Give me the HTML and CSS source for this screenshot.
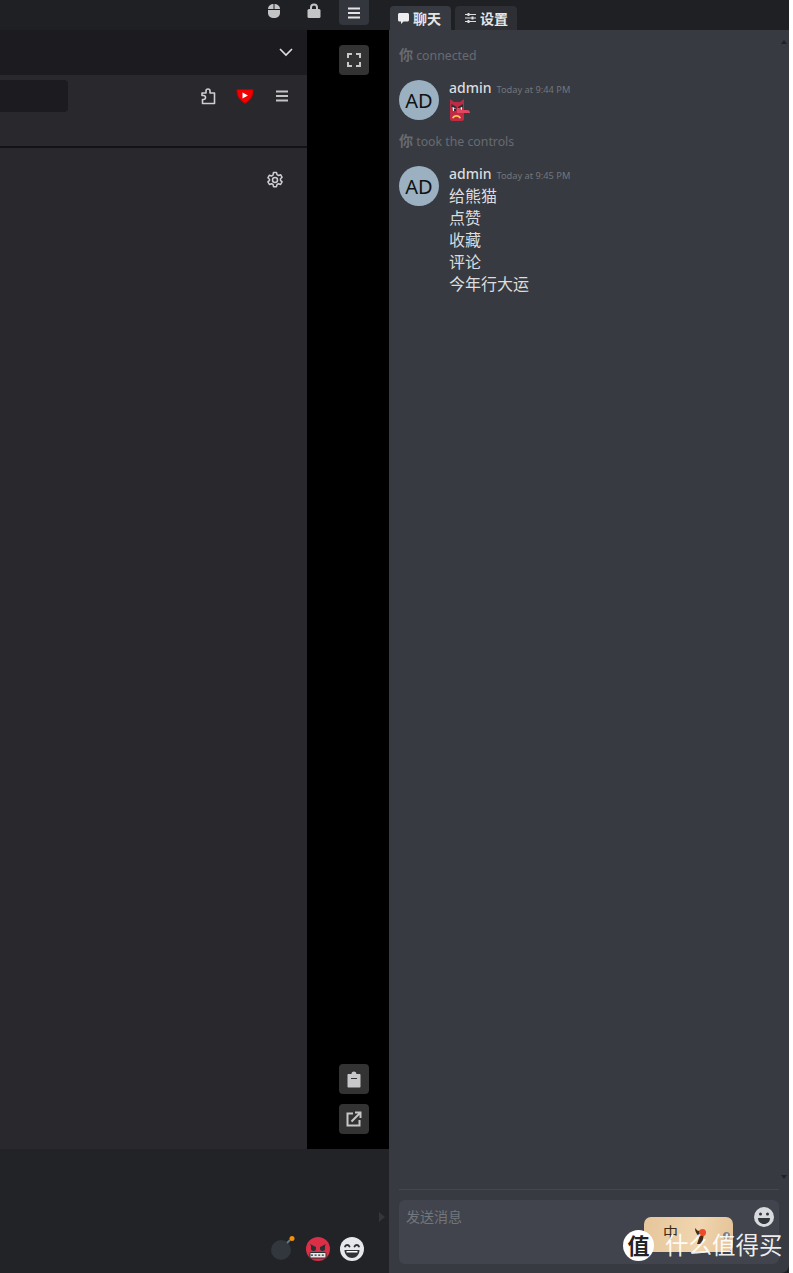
FILE: index.html
```html
<!DOCTYPE html>
<html lang="en">
<head>
    <meta charset="UTF-8">
    <meta name="viewport" content="width=device-width, initial-scale=1.0">
    <title>Remote Session</title>
    <link rel="stylesheet" href="styles.css">
</head>
<body>
    <div class="app">
        <div class="remote">
            <div class="topbar">
                <span class="top-icon">
                    <svg width="12" height="14" viewBox="0 0 12 14"><path fill="#c4c4c6" d="M6 0C2.500 0 0 2 0 5v4c0 3 2.500 5 6 5s6-2 6-5V5c0-3-2.500-5-6-5z"/><path stroke="#1f2024" stroke-width="1" d="M6 0v5.500M0 5.500h12"/></svg>
                </span>
                <span class="top-icon">
                    <svg width="14" height="15" viewBox="0 0 14 15"><path fill="none" stroke="#c4c4c6" stroke-width="2" d="M4 6V4.500a3 3 0 0 1 6 0V6"/><rect x="0.500" y="6" width="13" height="9" rx="1.500" fill="#c4c4c6"/></svg>
                </span>
                <span class="tool-btn tool-btn-top">
                    <svg width="14" height="12" viewBox="0 0 14 12"><path stroke="#e4e4e6" stroke-width="2" d="M1 1.500h12M1 6h12M1 10.500h12"/></svg>
                </span>
            </div>
            <div class="stage">
                <div class="browser">
                    <div class="tabstrip">
                        <svg width="14" height="9" viewBox="0 0 14 9"><path fill="none" stroke="#e0e0e2" stroke-width="1.600" d="M1 1l6 6 6-6"/></svg>
                    </div>
                    <div class="toolbar">
                        <div class="urlbar"></div>
                        <div class="toolbar-icons">
                            <svg class="puzzle" width="16" height="17" viewBox="0 0 16 17"><path fill="none" stroke="#cfcfd2" stroke-width="1.600" stroke-linejoin="round" d="M6 5V3a2 2 0 0 1 4 0v2h4.500v10.500H2.500v-4h1a2 2 0 0 0 0-4h-1.500V5z"/></svg>
                            <svg width="20" height="20" viewBox="0 0 20 20"><path fill="#f00000" stroke="#b50000" stroke-width="1" d="M2 3.500h16c.5 5.500-1.500 10-8 14-6.500-4-8.500-8.500-8-14z"/><path fill="#fff" d="M7.500 6.500l5.500 3-5.500 3z"/></svg>
                            <svg width="14" height="12" viewBox="0 0 14 12"><path stroke="#c4c4c6" stroke-width="2" d="M1 1.500h12M1 6h12M1 10.500h12"/></svg>
                        </div>
                    </div>
                    <div class="page">
                        <svg width="18" height="18" viewBox="0 0 18 18"><path fill="none" stroke="#cfcfd2" stroke-width="1.500" stroke-linejoin="round" d="M7.500 1.500h3l.5 2.200 1.500.8 2.100-.8 1.500 2.600-1.600 1.500v1.600l1.600 1.500-1.500 2.600-2.100-.8-1.500.8-.5 2.200h-3L7 13.500l-1.500-.8-2.100.8-1.500-2.600 1.600-1.500V8.300L1.900 6.800l1.500-2.600 2.100.8L7 4.200z"/><circle cx="9" cy="9" r="2.500" fill="none" stroke="#cfcfd2" stroke-width="1.500"/></svg>
                    </div>
                </div>
                <div class="side-tools">
                    <span class="tool-btn">
                        <svg width="14" height="14" viewBox="0 0 14 14"><path fill="none" stroke="#c8c8ca" stroke-width="2" d="M1 5V1h4M9 1h4v4M13 9v4H9M5 13H1V9"/></svg>
                    </span>
                    <div class="side-tools-bottom">
                        <span class="tool-btn">
                            <svg width="14" height="17" viewBox="0 0 14 17"><path fill="#c8c8ca" d="M1.500 3H4.500a2.500 2.500 0 0 1 5 0h3c.6 0 1 .4 1 1v11.500c0 .6-.4 1-1 1h-11c-.6 0-1-.4-1-1V4c0-.6.4-1 1-1z"/><path stroke="#333" stroke-width="1" d="M4 7.500h6"/></svg>
                        </span>
                        <span class="tool-btn">
                            <svg width="16" height="16" viewBox="0 0 16 16"><path fill="none" stroke="#c8c8ca" stroke-width="2" d="M7 2.500H1.500v12h12V9M5.500 10.500L14 2M9 1.500h5.500V7"/></svg>
                        </span>
                    </div>
                </div>
            </div>
            <div class="bottombar">
                <span class="more-arrow"></span>
                <div class="reactions">
                    <svg width="26" height="26" viewBox="0 0 26 26"><circle cx="11" cy="15" r="10" fill="#31373d"/><path stroke="#66757f" stroke-width="2" d="M17 8l3-3"/><circle cx="22" cy="3.500" r="2.500" fill="#f4900c"/></svg>
                    <svg width="24" height="24" viewBox="0 0 24 24"><circle cx="12" cy="12" r="12" fill="#da2f47"/><path fill="#292f33" d="M4 7l6 3v1.500a2.500 2.500 0 0 1-5 0V9zM20 7l-6 3v1.500a2.500 2.500 0 0 0 5 0V9z"/><rect x="3.500" y="15" width="17" height="6.500" rx="2" fill="#292f33"/><rect x="4.500" y="16" width="15" height="4.500" fill="#e8e8e8"/><path stroke="#292f33" stroke-width="1.200" stroke-dasharray="2 1.600" d="M5 18.200h14"/></svg>
                    <svg width="24" height="24" viewBox="0 0 24 24"><circle cx="12" cy="12" r="12" fill="#e6e8eb"/><path fill="none" stroke="#2f3338" stroke-width="1.800" stroke-linecap="round" d="M5 9.500c1-2 3.500-2 4.500 0M14.500 9.500c1-2 3.500-2 4.500 0"/><path fill="#2f3338" d="M4.500 13h15c0 4.500-3.500 8-7.500 8s-7.500-3.500-7.500-8z"/><path fill="#fff" d="M6.500 14h11v1.500h-11z"/></svg>
                </div>
            </div>
        </div>

        <div class="chat">
            <div class="chat-tabs">
                <div class="chat-tab chat-tab-active">
                    <svg width="11" height="11" viewBox="0 0 11 11"><path fill="#eee" d="M1.500 0h8c.8 0 1.500.7 1.500 1.500v5.500c0 .8-.7 1.500-1.500 1.500H5.500L3 11V8.500H1.500C.7 8.500 0 7.800 0 7V1.500C0 .7.700 0 1.500 0z"/></svg>
                    <span>聊天</span>
                </div>
                <div class="chat-tab">
                    <svg width="11" height="10" viewBox="0 0 11 10"><path stroke="#ddd" stroke-width="1.200" d="M0 1.500h11M0 5h11M0 8.500h11"/><path stroke="#ddd" stroke-width="2" d="M3.500 0v3M7.500 3.500v3M3.500 7v3"/></svg>
                    <span>设置</span>
                </div>
            </div>
            <div class="chat-panel">
                <div class="messages">
                    <span class="scroll-up"></span>
                    <p class="notice"><b>你</b> connected</p>
                    <div class="msg">
                        <div class="avatar">AD</div>
                        <div class="msg-body">
                            <div class="msg-head"><span class="msg-name">admin</span><span class="msg-time">Today at 9:44 PM</span></div>
                            <svg class="goblin" width="22" height="22" viewBox="0 0 22 22"><path fill="#bf2a45" d="M1 0l4 3h6l4-3v20c0 1-1 2-2 2H3c-1 0-2-1-2-2z"/><path fill="#292f33" d="M2.500 5l5 3v2l-5-2zM14 5L9 8v2l5-2z"/><path fill="#fff" d="M3.500 8l3.500 1.500V12H4zM13 8l-3 1.500V12h3z"/><path fill="#292f33" d="M5 9.500h2V12H5zM10 9.500h2V12h-2z"/><path fill="#e2475f" d="M8 9h2l3 2h5c2 0 3 1 3 3H8z"/><path fill="#ffcc4d" d="M3 19c1-4 8-4 9 0l-1.500 .5c-1-2.500-5-2.500-6 0z"/></svg>
                        </div>
                    </div>
                    <p class="notice notice-second"><b>你</b> took the controls</p>
                    <div class="msg">
                        <div class="avatar">AD</div>
                        <div class="msg-body">
                            <div class="msg-head msg-head-tall"><span class="msg-name">admin</span><span class="msg-time">Today at 9:45 PM</span></div>
                            <p class="msg-line">给熊猫</p>
                            <p class="msg-line">点赞</p>
                            <p class="msg-line">收藏</p>
                            <p class="msg-line">评论</p>
                            <p class="msg-line">今年行大运</p>
                        </div>
                    </div>
                    <span class="scroll-down"></span>
                </div>
                <div class="composer">
                    <span class="composer-hint">发送消息</span>
                    <svg class="composer-emoji" width="20" height="20" viewBox="0 0 20 20"><circle cx="10" cy="10" r="10" fill="#d8dadd"/><circle cx="6.500" cy="7" r="1.500" fill="#32353b"/><circle cx="13.500" cy="7" r="1.500" fill="#32353b"/><path fill="#32353b" d="M4 11h12c0 3.500-2.500 6-6 6s-6-2.500-6-6z"/></svg>
                    <div class="ime-badge">
                        <span class="ime-char">中</span>
                        <svg class="ime-mark" width="14" height="16" viewBox="0 0 14 16"><path fill="#4a2e14" d="M2 0l3 3c4-1 7 3 5 8l-1 5H4l2-6C6 7 2 6 2 0z"/></svg>
                        <span class="ime-dot"></span>
                        <span class="ime-gear"></span>
                    </div>
                </div>
            </div>
        </div>
    </div>

    <div class="watermark">
        <span class="watermark-logo">值</span>
        <span>什么值得买</span>
    </div>
</body>
</html>
```

FILE: styles.css
```css
html, body {
    margin: 0;
    height: 100%;
}

body {
    background: #fff;
    font-family: "Noto Sans", "Noto Sans CJK SC", sans-serif;
    overflow: hidden;
}

.app {
    display: flex;
    width: 789px;
    height: 1273px;
}

/* left side: remote desktop */
.remote {
    width: 389px;
    display: flex;
    flex-direction: column;
}

.topbar {
    height: 30px;
    background: #1f2024;
    display: flex;
    justify-content: flex-end;
    align-items: flex-start;
    padding-right: 20px;
    box-sizing: border-box;
}

.top-icon {
    width: 40px;
    height: 21px;
    display: flex;
    align-items: center;
    justify-content: center;
}

.top-icon:nth-child(2) {
    margin-right: 5px;
}

.tool-btn {
    width: 30px;
    height: 30px;
    background: #333;
    border-radius: 4px;
    display: flex;
    align-items: center;
    justify-content: center;
}

.tool-btn-top {
    height: 25px;
    background: #33363d;
    border-radius: 0 0 4px 4px;
}

.stage {
    height: 1119px;
    display: flex;
    background: #000;
}

.browser {
    width: 307px;
    display: flex;
    flex-direction: column;
}

.tabstrip {
    height: 45px;
    background: #1c1b20;
    display: flex;
    align-items: center;
    justify-content: flex-end;
    padding-right: 14px;
    box-sizing: border-box;
}

.toolbar {
    height: 71px;
    background: #28282d;
    display: flex;
    justify-content: space-between;
    align-items: flex-start;
    padding: 5px 18px 0 0;
    box-sizing: border-box;
}

.urlbar {
    width: 68px;
    height: 32px;
    background: #1c1b20;
    border-radius: 0 4px 4px 0;
}

.toolbar-icons {
    display: flex;
    align-items: center;
    gap: 20px;
    height: 32px;
}

.puzzle {
    margin-right: -1px;
}

.page {
    flex: 1;
    background: #28282d;
    border-top: 2px solid #131317;
    display: flex;
    justify-content: flex-end;
    padding: 23px 23px 0 0;
}

.side-tools {
    flex: 1;
    display: flex;
    flex-direction: column;
    justify-content: space-between;
    align-items: flex-start;
    padding: 15px 0 15px 32px;
}

.side-tools-bottom {
    display: flex;
    flex-direction: column;
    gap: 10px;
}

.bottombar {
    flex: 1;
    background: #212327;
    position: relative;
}

.more-arrow {
    position: absolute;
    right: 4px;
    top: 63px;
    border-left: 6px solid #33363b;
    border-top: 5px solid transparent;
    border-bottom: 5px solid transparent;
}

.reactions {
    position: absolute;
    right: 25px;
    bottom: 12px;
    display: flex;
    align-items: flex-end;
    gap: 10px;
}

/* right side: chat */
.chat {
    width: 400px;
    background: #1f2024;
    display: flex;
    flex-direction: column;
}

.chat-tabs {
    height: 30px;
    display: flex;
    align-items: flex-end;
    gap: 4px;
    padding-left: 1px;
    box-sizing: border-box;
}

.chat-tab {
    height: 24px;
    width: 62px;
    padding-left: 10px;
    background: #2d2f34;
    border-radius: 4px 4px 0 0;
    display: flex;
    align-items: center;
    gap: 4px;
    color: #e6e6e6;
    font-size: 14px;
    font-weight: 700;
    box-sizing: border-box;
}

.chat-tab-active {
    width: 61px;
    padding-left: 8px;
    background: #373a41;
}

.chat-panel {
    flex: 1;
    background: #373a41;
    border-radius: 0 0 8px 0;
    display: flex;
    flex-direction: column;
    padding: 0 10px 9px;
    position: relative;
}

.messages {
    flex: 1;
    border-bottom: 1px solid #44474e;
    padding-top: 15px;
    box-sizing: border-box;
}

.scroll-up, .scroll-down {
    position: absolute;
    right: 2px;
    border-left: 3px solid transparent;
    border-right: 3px solid transparent;
}

.scroll-up {
    top: 10px;
    border-bottom: 4px solid #20222a;
}

.scroll-down {
    top: 1145px;
    border-top: 4px solid #20222a;
}

.notice {
    margin: 0;
    height: 20px;
    font-size: 12.300px;
    line-height: 20px;
    color: #686b71;
}

.notice-second {
    margin-top: 10px;
}

.notice b {
    font-size: 14px;
    font-weight: 700;
}

.msg {
    display: flex;
    gap: 10px;
    margin-top: 15px;
}

.avatar {
    width: 40px;
    height: 40px;
    border-radius: 50%;
    background: #9bb0c1;
    color: #101214;
    font-size: 20px;
    display: flex;
    align-items: center;
    justify-content: center;
    flex-shrink: 0;
}

.msg-head {
    display: flex;
    align-items: baseline;
    gap: 5px;
    height: 18px;
    margin-top: -1px;
    line-height: 18px;
}

.msg-head-tall {
    height: 20px;
}

.msg-name {
    color: #dcddde;
    font-size: 14px;
    font-weight: 500;
}

.msg-time {
    color: #72767d;
    font-size: 9.250px;
}

.goblin {
    display: block;
    margin-top: 2px;
}

.msg-line {
    margin: 0;
    color: #dcddde;
    font-size: 16px;
    line-height: 22px;
}

.composer {
    height: 64px;
    margin-top: 10px;
    background: #41444c;
    border-radius: 6px;
    position: relative;
    flex-shrink: 0;
}

.composer-hint {
    position: absolute;
    left: 7px;
    top: 7px;
    font-size: 14px;
    line-height: 20px;
    color: #72767d;
}

.composer-emoji {
    position: absolute;
    right: 5px;
    top: 7px;
}

.ime-badge {
    position: absolute;
    left: 245px;
    top: 17px;
    width: 89px;
    height: 35px;
    border-radius: 7px;
    background: linear-gradient(100deg, #e6c69b, #f0d5ae 60%, #e4c296);
}

.ime-char {
    position: absolute;
    left: 19px;
    top: 8px;
    font-size: 15px;
    line-height: 15px;
    color: #3b2a18;
}

.ime-mark {
    position: absolute;
    left: 49px;
    top: 11px;
}

.ime-dot {
    position: absolute;
    left: 55px;
    top: 12px;
    width: 7px;
    height: 7px;
    border-radius: 50%;
    background: #f0492c;
}

.ime-gear {
    position: absolute;
    left: 79px;
    top: 15px;
    width: 7px;
    height: 7px;
    border-radius: 50%;
    background: #7b7f87;
}

.watermark {
    position: absolute;
    left: 623px;
    top: 1230px;
    display: flex;
    align-items: center;
    gap: 11px;
    color: rgba(255, 255, 255, 0.92);
    font-size: 23.500px;
    line-height: 31px;
    white-space: nowrap;
}

.watermark-logo {
    width: 31px;
    height: 31px;
    border-radius: 50%;
    background: #fff;
    color: #222;
    font-size: 22px;
    font-weight: 700;
    display: flex;
    align-items: center;
    justify-content: center;
}
```
